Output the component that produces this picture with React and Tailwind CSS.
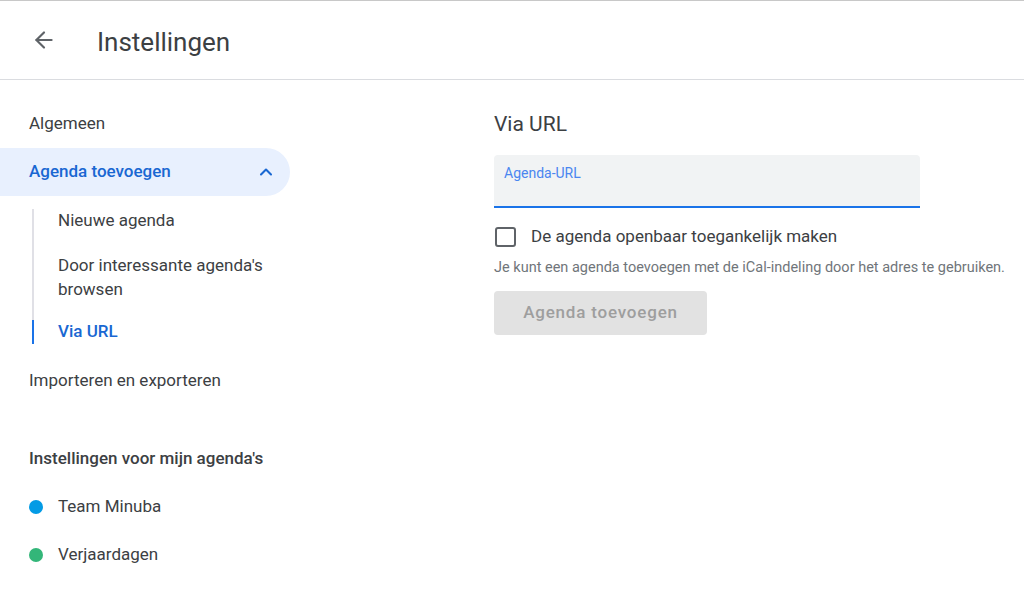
import { ArrowLeft, ChevronUp } from "lucide-react";

const font = { fontFamily: "Roboto, 'Noto Sans', Arial, sans-serif" };

export default function App() {
  return (
    <div className="h-[593px] w-[1024px] overflow-hidden bg-white" style={font}>
      <header className="flex h-[80px] items-center border-t border-b border-t-[#c8c8c8] border-b-[#dadce0]">
        <button type="button" className="ml-[30px] flex h-[24px] w-[28px] items-center justify-center text-[#5f6368]">
          <ArrowLeft size={26} strokeWidth={2} />
        </button>
        <h1 className="ml-[39px] mt-[3px] text-[26px] leading-none text-[#3c4043]">Instellingen</h1>
      </header>

      <div className="flex">
        <nav className="w-[290px] pt-[32px] text-[17px] text-[#3c4043]">
          <div className="flex h-[24px] items-center pl-[29px]">Algemeen</div>

          <div className="mt-[12px] flex h-[48px] items-center justify-between rounded-r-full bg-[#e8f0fe] pl-[29px] pr-[14px] font-medium text-[#1967d2]">
            <span>Agenda toevoegen</span>
            <ChevronUp size={20} strokeWidth={2.5} />
          </div>

          <div className="ml-[32px] mt-[13px] flex flex-col">
            <div className="flex h-[24px] items-center border-l-2 border-[#e0e0e6] pl-[24px]">Nieuwe agenda</div>
            <div className="border-l-2 border-[#e0e0e6] pl-[24px] pb-[19px] pt-[20px] leading-[24px]">
              Door interessante agenda's
              <br />
              browsen
            </div>
            <div className="flex h-[24px] items-center border-l-2 border-[#1a73e8] pl-[24px] font-medium text-[#1967d2]">
              Via URL
            </div>
          </div>

          <div className="mt-[25px] flex h-[24px] items-center pl-[29px]">Importeren en exporteren</div>

          <div className="mt-[54px] flex h-[24px] items-center pl-[29px] font-medium">
            Instellingen voor mijn agenda's
          </div>

          <div className="mt-[24px] flex h-[24px] items-center pl-[29px]">
            <span className="h-[14px] w-[14px] rounded-full bg-[#039be5]" />
            <span className="ml-[15px]">Team Minuba</span>
          </div>
          <div className="mt-[24px] flex h-[24px] items-center pl-[29px]">
            <span className="h-[14px] w-[14px] rounded-full bg-[#33b679]" />
            <span className="ml-[15px]">Verjaardagen</span>
          </div>
        </nav>

        <main className="ml-[204px] pt-[32px]">
          <h2 className="flex h-[26px] items-center text-[21px] text-[#3c4043]">Via URL</h2>

          <div className="mt-[17px] h-[53px] w-[426px] rounded-t-[4px] border-b-2 border-[#1a73e8] bg-[#f1f3f4] px-[10px] pt-[6px]">
            <span className="text-[14px] leading-none text-[#4a86f0]">Agenda-URL</span>
          </div>

          <label className="mt-[17px] flex h-[24px] items-center text-[17px] text-[#3c4043]">
            <span className="ml-[1px] h-[20px] w-[21px] rounded-[3px] border-2 border-[#5f6368]" />
            <span className="ml-[15px]">De agenda openbaar toegankelijk maken</span>
          </label>

          <p className="mt-[11px] text-[14.5px] leading-[16px] text-[#70757a]">
            Je kunt een agenda toevoegen met de iCal-indeling door het adres te gebruiken.
          </p>

          <button
            type="button"
            className="mt-[15px] h-[44px] w-[213px] rounded-[4px] bg-[#e2e2e2] text-[17px] font-medium tracking-[0.8px] text-[#9e9e9e]"
          >
            Agenda toevoegen
          </button>
        </main>
      </div>
    </div>
  );
}
